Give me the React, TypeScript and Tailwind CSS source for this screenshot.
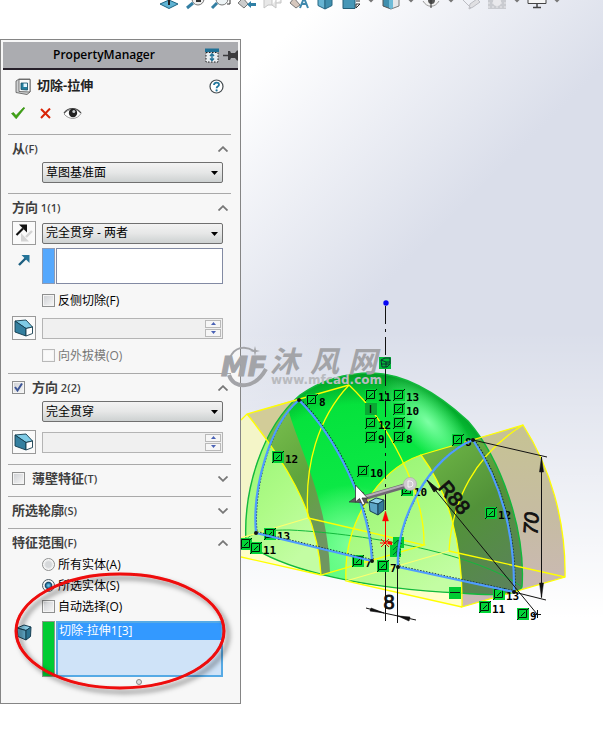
import { useState } from "react";
import type { ReactNode } from "react";

const cjk = "font-['Open_Sans','Noto_Sans_CJK_SC',sans-serif]";

/* ---------- Small icons ---------- */

function Chevron({ open }: { open: boolean }) {
  return (
    <svg viewBox="0 0 10 6" className="w-[10px] h-[6px]" fill="none" stroke="#777" strokeWidth="1.8">
      <path d={open ? "M0.5 5.5 L5 1.2 L9.5 5.5" : "M0.5 0.5 L5 4.8 L9.5 0.5"} />
    </svg>
  );
}

function DraftIcon() {
  return (
    <svg viewBox="0 0 20 18" className="w-5 h-[18px] shrink-0" stroke="#123a4c" strokeWidth="0.9" strokeLinejoin="round">
      <path d="M1 2 L12 1 L18.5 8 L12 9.5 Z" fill="#7fcbe6" />
      <path d="M1 2 L12 9.5 L12 17 L1 13 Z" fill="#347f9f" />
      <path d="M12 9.5 L18.5 8 L18.5 14.5 L12 17 Z" fill="#fff" />
    </svg>
  );
}

function CubeIcon() {
  return (
    <svg viewBox="0 0 16 17" className="w-4 h-[17px]" stroke="#174055" strokeWidth="1" strokeLinejoin="round">
      <path d="M1 4 L8 1 L15 3 L10 6.5 Z" fill="#8bd0ea" />
      <path d="M1 4 L10 6.5 L10 16 L2 12.5 Z" fill="#5fa9c8" />
      <path d="M10 6.5 L15 3 L14.5 12.5 L10 16 Z" fill="#2c7391" />
    </svg>
  );
}

/* ---------- Form parts ---------- */

function Dropdown({ label, options }: { label: string; options: string[] }) {
  return (
    <div className="relative">
      <select
        aria-label={label}
        className="block w-full h-[21px] appearance-none rounded-[2px] border border-[#707070] bg-gradient-to-b from-[#f3f3f3] via-[#e6e7e7] to-[#cdd1d1] pl-[3px] pr-5 text-xs leading-[18px] text-black"
      >
        {options.map((o) => (
          <option key={o}>{o}</option>
        ))}
      </select>
      <svg viewBox="0 0 7 4" className="pointer-events-none absolute right-[5px] top-[9px] w-[7px] h-1">
        <path d="M0 0 H7 L3.5 4 Z" fill="#000" />
      </svg>
    </div>
  );
}

function Spinner({ label }: { label: string }) {
  return (
    <div className="flex h-[21px] border border-[#b4b4b4] bg-[#f0f0f0] p-px">
      <input type="text" disabled aria-label={label} className="min-w-0 flex-1 bg-transparent" />
      <div className="flex w-4 flex-col gap-px">
        {["M0 3 H5 L2.5 0 Z", "M0 0 H5 L2.5 3 Z"].map((d, i) => (
          <button
            key={d}
            aria-label={i === 0 ? "+" : "-"}
            className="flex flex-1 items-center justify-center border border-[#b9b9b9] bg-[#f6f6f6]"
          >
            <svg viewBox="0 0 5 3" className="w-[5px] h-[3px]">
              <path d={d} fill="#4a62b5" />
            </svg>
          </button>
        ))}
      </div>
    </div>
  );
}

interface CheckProps {
  children?: ReactNode;
  label?: string;
  checked?: boolean;
  disabled?: boolean;
}

function Check({ children, label, checked, disabled }: CheckProps) {
  return (
    <label className={`flex items-center gap-[3px] text-xs leading-[13px] ${disabled ? "text-[#777]" : "text-black"}`}>
      <span className="relative block w-[13px] h-[13px]">
        <input
          type="checkbox"
          aria-label={label}
          defaultChecked={checked}
          disabled={disabled}
          className="peer block w-[13px] h-[13px] appearance-none border border-[#8e8f8f] bg-gradient-to-br from-[#cdcfd3] to-[#f8f8f8] shadow-[inset_0_0_0_1px_#f4f4f4] disabled:border-[#b9b9b9] disabled:from-[#fafafa] disabled:to-[#fafafa]"
        />
        <svg viewBox="0 0 13 13" className="pointer-events-none absolute inset-0 hidden peer-checked:block">
          <path d="M3 6 L5.5 9.5 L10 2.5" fill="none" stroke="#3c5596" strokeWidth="2" />
        </svg>
      </span>
      {children}
    </label>
  );
}

function Radio({ children, checked }: { children: ReactNode; checked?: boolean }) {
  return (
    <label className="flex items-center gap-[3px] text-xs leading-[13px] text-black">
      <input
        type="radio"
        name="scope"
        defaultChecked={checked}
        className="w-[13px] h-[13px] appearance-none rounded-full border border-[#8e8f8f] bg-[radial-gradient(circle,#d6d8da_35%,#f8f8f8_65%)] checked:border-[#4d5a62] checked:bg-[radial-gradient(circle,#69c5ee_8%,#0f4466_42%,#f4f4f4_55%)]"
      />
      {children}
    </label>
  );
}

interface SectionProps {
  title: string;
  hotkey: string;
  defaultOpen?: boolean;
  lead?: ReactNode;
  className: string;
  children?: ReactNode;
}

function Section({ title, hotkey, defaultOpen = false, lead, className, children }: SectionProps) {
  const [open, setOpen] = useState(defaultOpen);

  return (
    <section className={`ml-[5px] mr-[7px] border-t border-[#a9a9a9] ${className}`}>
      <div className="flex h-[27px] items-center pl-1 pr-[3px]">
        {lead && <span className="mr-[7px]">{lead}</span>}
        <h3 className="flex-1 text-[13px] font-bold leading-4 text-[#3f3f3f]">
          {title}
          <span className="text-[11px] font-semibold">{hotkey}</span>
        </h3>
        <button aria-label={title} onClick={() => setOpen(!open)}>
          <Chevron open={open} />
        </button>
      </div>
      {open && <div className="pl-1 pr-2">{children}</div>}
    </section>
  );
}

function Row({ icon, children }: { icon?: ReactNode; children: ReactNode }) {
  return (
    <div className="grid grid-cols-[24px_minmax(0,1fr)] items-center gap-x-[6px]">
      <div className="flex justify-center">{icon}</div>
      {children}
    </div>
  );
}

function ToolButton({ label, children }: { label: string; children: ReactNode }) {
  return (
    <button aria-label={label} className="flex w-6 h-6 items-center justify-center border border-[#9a9a9a] bg-[#fafafa]">
      {children}
    </button>
  );
}

/* ---------- Property panel ---------- */

function PropertyPanel() {
  return (
    <aside className="relative z-10 mt-[29px] w-[241px] border border-[#858585] bg-[#f7f7f7] p-[2px] pb-[26px]">
      <header className="flex h-7 items-center border-b-2 border-[#26202a] bg-[#abacb0]">
        <h2 className="flex-1 pl-[50px] text-xs font-semibold text-black">PropertyManager</h2>
        <svg viewBox="0 0 14 15" className="mr-1 w-[14px] h-[15px]">
          <path d="M1 4.5 H13 V14 H1 Z" fill="#e9edf0" stroke="#222" strokeDasharray="1.5 1.5" />
          <path d="M0 0.5 H14 V4 H0 Z" fill="#1f7196" />
          <path d="M7 5.5 V12.5 M5 8 L7 5.8 L9 8 M5 10.5 L7 12.5 L9 10.5" fill="none" stroke="#1f7196" strokeWidth="1.4" />
        </svg>
        <svg viewBox="0 0 15 11" className="w-[15px] h-[11px]" fill="#3b3b3d">
          <path d="M0 4.7 H5 V1 H7 L8 3 H12 L14 0.5 H15 V10.5 H14 L12 8 H8 L7 10 H5 V6.3 H0 Z" />
        </svg>
      </header>

      <div className="flex h-8 items-center pl-3 pr-[14px]">
        <svg viewBox="0 0 16 17" className="w-4 h-[17px]" stroke="#555" strokeWidth="0.8" strokeLinejoin="round">
          <path d="M1 3 L4 1 H15 V14 L12 16.5 L1 14.5 Z" fill="#cfd1d2" />
          <path d="M4 1.5 H15 V14 L4 13.5 Z" fill="#fafafa" />
          <path d="M6 5 H12.5 V12 L6 11.5 Z" fill="#247fa0" stroke="#174e66" />
          <path d="M8.5 5.5 H12 V9 H8.5 Z" fill="#e3f6ff" stroke="none" />
        </svg>
        <h1 className="flex-1 pl-[6px] text-[13px] font-bold text-[#222]">切除-拉伸</h1>
        <button aria-label="帮助">
          <svg viewBox="0 0 15 15" className="w-[15px] h-[15px]">
            <circle cx="7.5" cy="7.5" r="6.5" fill="#fff" stroke="#454c50" strokeWidth="1.2" />
            <path d="M5 6 C5 2.8 10 2.8 10 5.7 C10 7.4 7.6 7.2 7.6 9.3" fill="none" stroke="#22779d" strokeWidth="1.8" />
            <circle cx="7.6" cy="11.4" r="1.1" fill="#22779d" />
          </svg>
        </button>
      </div>

      <div className="mb-[10px] flex h-[22px] items-center pl-2">
        <button aria-label="确定">
          <svg viewBox="0 0 14 12" className="w-[14px] h-3">
            <path d="M0.5 6.5 L2.5 5.5 L5 8.5 L12.5 0.5 L13.8 1 L5.2 11.8 Z" fill="#3fa312" stroke="#2e8a0b" strokeWidth="0.6" />
          </svg>
        </button>
        <button aria-label="取消" className="ml-[15px]">
          <svg viewBox="0 0 11 11" className="w-[11px] h-[11px]">
            <path d="M1 1 L10 10 M10 0.5 L1 10" stroke="#d92507" strokeWidth="2" />
          </svg>
        </button>
        <button aria-label="预览" className="ml-3">
          <svg viewBox="0 0 19 13" className="w-[19px] h-[13px]">
            <path d="M1 7 C5 1 14 1 18 6.5 C14 13 6 13 1 7 Z" fill="#fff" stroke="#999" />
            <path d="M1 6 C5 0 14 0 18 6" fill="none" stroke="#444" strokeWidth="1.2" />
            <circle cx="10" cy="6" r="4.2" fill="#222" />
            <circle cx="10.8" cy="4.4" r="1.5" fill="#c9cdd0" />
          </svg>
        </button>
      </div>

      <Section title="从" hotkey="(F)" defaultOpen className="pb-[10px]">
        <Row>
          <Dropdown label="从" options={["草图基准面", "曲面/面/基准面", "顶点", "等距"]} />
        </Row>
      </Section>

      <Section title="方向" hotkey=" 1(1)" defaultOpen className="pb-[3px]">
        <Row
          icon={
            <ToolButton label="反向">
              <svg viewBox="0 0 18 20" className="w-[18px] h-5 shrink-0">
                <path d="M17 8 L11 14" stroke="#d4d4d4" strokeWidth="2.4" />
                <path d="M6 10 V18.5 H14 Z" fill="#d4d4d4" />
                <path d="M1.5 12 L8 5.5" stroke="#111" strokeWidth="2.2" />
                <path d="M4 1.5 H12 V9.5 Z" fill="#111" />
              </svg>
            </ToolButton>
          }
        >
          <Dropdown label="终止条件 1" options={["完全贯穿 - 两者", "完全贯穿", "给定深度"]} />
        </Row>
        <div className="mt-[3px]">
          <Row
            icon={
              <svg viewBox="0 0 12 12" className="mb-3 w-3 h-3">
                <path d="M1 11 L8 4" stroke="#1d5f80" strokeWidth="2.4" />
                <path d="M3.5 1 H11.5 V9 Z" fill="#247398" />
              </svg>
            }
          >
            <div className="flex h-9 gap-px">
              <div className="w-[13px] border border-[#8d9bb5] bg-[#55a8fd]" />
              <textarea aria-label="拉伸方向" className="min-w-0 flex-1 resize-none border border-[#828aa3] bg-white" />
            </div>
          </Row>
        </div>
        <div className="flex h-8 items-center pl-[30px]">
          <Check>反侧切除(F)</Check>
        </div>
        <Row icon={<ToolButton label="拔模开/关 1"><DraftIcon /></ToolButton>}>
          <Spinner label="拔模角度 1" />
        </Row>
        <div className="flex h-[30px] items-center pl-[30px]">
          <Check disabled>向外拔模(O)</Check>
        </div>
      </Section>

      <Section title="方向" hotkey=" 2(2)" defaultOpen lead={<Check label="方向 2" checked />} className="pb-[10px]">
        <Row>
          <Dropdown label="终止条件 2" options={["完全贯穿", "给定深度"]} />
        </Row>
        <div className="mt-2">
          <Row icon={<ToolButton label="拔模开/关 2"><DraftIcon /></ToolButton>}>
            <Spinner label="拔模角度 2" />
          </Row>
        </div>
      </Section>

      <Section title="薄壁特征" hotkey="(T)" lead={<Check label="薄壁特征" />} className="pb-1" />
      <Section title="所选轮廓" hotkey="(S)" className="pb-1" />

      <Section title="特征范围" hotkey="(F)" defaultOpen className="">
        <div className="flex flex-col gap-2 pl-[30px] pt-[2px]">
          <Radio>所有实体(A)</Radio>
          <Radio checked>所选实体(S)</Radio>
          <Check>自动选择(O)</Check>
        </div>
        <div className="mt-2">
          <Row icon={<div className="mb-[34px]"><CubeIcon /></div>}>
            <div className="flex h-14 gap-px">
              <div className="w-[13px] border border-[#8b9b8b] bg-[#00cc33]" />
              <ul className="min-w-0 flex-1 border-2 border-[#56aae5] bg-[#cfe3f8] text-xs text-white">
                <li className="h-[17px] bg-[#3399ff] pl-px leading-[16px]">切除-拉伸1[3]</li>
              </ul>
            </div>
          </Row>
        </div>
      </Section>

      {/* Resize grip and the red annotation ring */}
      <svg viewBox="0 0 240 150" className="pointer-events-none absolute left-0 bottom-0 w-[240px] h-[150px]">
        <defs>
          <filter id="ringShadow" x="-10%" y="-10%" width="125%" height="130%">
            <feDropShadow dx="4" dy="4" stdDeviation="2.5" floodColor="#000" floodOpacity="0.5" />
          </filter>
        </defs>
        <circle cx="138" cy="129" r="2.5" fill="#ddd" stroke="#888" />
        <ellipse cx="119" cy="78" rx="104" ry="57" fill="none" stroke="#ee0808" strokeWidth="3" filter="url(#ringShadow)" />
      </svg>
    </aside>
  );
}

/* ---------- View toolbar ---------- */

const toolbar: { name: string; art: ReactNode }[] = [
  { name: "正视于", art: <><path d="M4 4 L13 0 L22 4 L13 8.5 Z" fill="#5fb3d3" stroke="#1f6583" /><path d="M13 0 V5" stroke="#222" strokeWidth="2" /></> },
  { name: "整屏显示全图", art: <><circle cx="16" cy="-1" r="6" fill="#eee" stroke="#777" /><path d="M11 3 L5 8" stroke="#347fa3" strokeWidth="3" /><path d="M14 1 H19" stroke="#333" strokeWidth="2" /></> },
  { name: "局部放大", art: <><circle cx="14" cy="-1" r="6" fill="#eef4f6" stroke="#777" /><path d="M9 3 L4 8" stroke="#347fa3" strokeWidth="3" /><path d="M19 4 H22 V0" fill="none" stroke="#333" /></> },
  { name: "上一视图", art: <><path d="M4 3 L9 -2 L14 4 L10 8 Z" fill="#ccc" stroke="#777" /><path d="M13 4.5 L17 1 V3 H22 V6 H17 V8 Z" fill="#2e7fa5" /></> },
  { name: "剖面视图", art: <path d="M4 0 V8 L8 5 H12 V0 M12 5 L16 8 V0 M16 3 H21 V0" fill="#e8e8e8" stroke="#c5c5c5" /> },
  { name: "动态注解视图", art: <><path d="M4 3 L8 -2 L14 5 L10 8 Z" fill="#d6c7bd" stroke="#777" /><path d="M14 8 L18 -2 L22 8 M16 4 H21" fill="none" stroke="#4089ad" strokeWidth="2" /></> },
  { name: "视图定向", art: <><path d="M6 -2 H13 V9 L6 5.5 Z" fill="#67b4d2" stroke="#276682" /><path d="M13 -2 H20 V5.5 L13 9 Z" fill="#408fae" stroke="#276682" /></> },
  { name: "等轴测", art: <><path d="M5 -2 H17 V8.5 H5 Z" fill="#4797b7" stroke="#245f78" /><path d="M18 4 H22 L18 8 V4 M18 1 H22" fill="#fff" stroke="#333" /></> },
  { name: "caret", art: null },
  { name: "显示样式", art: <><path d="M5 -2 H13 V9 L5 6 Z" fill="#408fae" stroke="#555" /><path d="M13 -2 H21 V6 L13 9 Z" fill="#e5e7e9" stroke="#777" /><path d="M11 -2 H15 V8 L13 9 L11 8 Z" fill="#6fbbd7" /></> },
  { name: "caret", art: null },
  { name: "隐藏/显示项目", art: <><path d="M5 1 C9 8 17 8 21 1" fill="#f3f3f3" stroke="#999" /><path d="M10 0 A3.5 4 0 0 0 17 0 Z" fill="#555" /><path d="M13 0 V8" stroke="#333" /></> },
  { name: "caret", art: null },
  { name: "编辑外观", art: <><path d="M5 0 L13 8 M11 9 L12 4 L19 -1 L22 2 L15 7 Z" fill="#e0e0e3" stroke="#bcbdc3" /></> },
  { name: "应用布景", art: <><path d="M4 -1 H22 V9 H4 Z" fill="#c9cbd0" /><path d="M4 7 H22 M4 3 H22" stroke="#e9e9ec" strokeDasharray="2 2" /><circle cx="13" cy="2" r="4" fill="#e9e9ec" /></> },
  { name: "caret", art: null },
  { name: "视图设定", art: <><path d="M4 -2 H22 V3.5 H4 Z" fill="#f5f5f5" stroke="#444" /><path d="M13 4 V7 M9 7.5 H17" stroke="#444" strokeWidth="1.5" /></> },
  { name: "caret", art: null },
];

function ViewToolbar() {
  return (
    <nav className="flex h-[10px] overflow-hidden pl-[156px]">
      {toolbar.map((t, i) =>
        t.name === "caret" ? (
          <svg key={i} viewBox="0 0 14 10" className="w-[14px] h-[10px] shrink-0">
            <path d="M4.5 0 H9.5 L7 2.5 Z" fill="#777" />
          </svg>
        ) : (
          <button key={i} aria-label={t.name} className="w-[26px] h-[10px] shrink-0">
            <svg viewBox="0 0 26 10" className="block w-[26px] h-[10px]">{t.art}</svg>
          </button>
        )
      )}
    </nav>
  );
}

/* ---------- Model view ---------- */

const DOME =
  "M246 543 C243 490 262 428 300 395 C323 379 348 373 372 373 C408 374 443 398 468 421 C501 459 526 530 522 587 C517 597 485 595 460 593 C370 589 285 572 246 543 Z";
const LEFT_FACE =
  "M241 420 L247 414 C280 455 318 510 321 575 L241 557 Z";
const LEFT_STRIP =
  "M247 414 L300 398 L289 412 C298 445 328 500 330 573 L321 575 C318 510 280 455 247 414 Z";
const RIGHT_FRONT =
  "M421 455 C449 492 463 545 462 607 L346 581 C343 525 377 470 421 455 Z";
const RIGHT_SIDE =
  "M421 455 L523 425 C550 467 566 520 565 577 L462 607 C463 545 449 492 421 455 Z";
const LEFT_SKETCH = "M299 400 C269 425 252 490 256 533 L372 561 C370 505 336 437 299 400 Z";
const RIGHT_SKETCH = "M473 440 C430 457 395 520 398 567 L514 592 C515 525 497 476 473 440 Z";

// [x, y, number] of each sketch relation, (x, y) being the tag's centre
const relations: [number, number, string][] = [
  [312, 400, "8"],
  [371, 395, "11"],
  [399, 395, "13"],
  [399, 409, "10"],
  [371, 423, "12"],
  [399, 423, "7"],
  [371, 437, "9"],
  [399, 437, "8"],
  [458, 440, "8"],
  [407, 490, "10"],
  [278, 457, "12"],
  [363, 471, "10"],
  [270, 534, "13"],
  [246, 544, "9"],
  [256, 548, "11"],
  [358, 561, "7"],
  [383, 566, "7"],
  [491, 513, "12"],
  [499, 594, "13"],
  [485, 607, "11"],
  [523, 614, "9"],
];

function RelationTag({ x, y, n }: { x: number; y: number; n: string }) {
  return (
    <g>
      <path d={`M${x - 6} ${y - 6} h12 v12 h-12 Z`} fill="#02d437" />
      <path
        d={`M${x - 4.5} ${y - 4.5} h8 v8 h-8 Z M${x - 6} ${y + 6} l2 -2 M${x - 2} ${y + 2} l4 -4 M${x + 4} ${y - 4} l2 -2`}
        fill="none"
        stroke="#001a05"
        strokeWidth="1"
      />
      <text x={x + 7} y={y + 6} className="font-['DejaVu_Sans_Mono',monospace] text-[11px] font-bold">
        {n}
      </text>
    </g>
  );
}

function ModelView() {
  return (
    <svg viewBox="0 0 603 736" className="pointer-events-none absolute left-0 top-0 w-[603px] h-[736px]">
      <defs>
        <linearGradient id="domeBase" x1="0" y1="0" x2="0.2" y2="1">
          <stop offset="0" stopColor="#08c936" />
          <stop offset="0.2" stopColor="#05e23c" />
          <stop offset="0.55" stopColor="#0be845" />
          <stop offset="1" stopColor="#59ff7c" />
        </linearGradient>
        <radialGradient id="domeShine" gradientUnits="userSpaceOnUse" cx="0" cy="0" r="1" gradientTransform="translate(428 422) rotate(46) scale(60 26)">
          <stop offset="0" stopColor="#7dffa4" />
          <stop offset="1" stopColor="#7dffa4" stopOpacity="0" />
        </radialGradient>
        {/* shade that follows the rim, stronger to the right */}
        <radialGradient id="domeEdge" gradientUnits="userSpaceOnUse" cx="358" cy="528" r="158">
          <stop offset="0.78" stopColor="#008c20" stopOpacity="0" />
          <stop offset="1" stopColor="#007c1c" stopOpacity="0.7" />
        </radialGradient>
        <radialGradient id="lowGlow" gradientUnits="userSpaceOnUse" cx="350" cy="545" r="60">
          <stop offset="0" stopColor="#7dff98" />
          <stop offset="1" stopColor="#7dff98" stopOpacity="0" />
        </radialGradient>
        <linearGradient id="tan" x1="0" y1="0" x2="0" y2="1">
          <stop offset="0" stopColor="#c6c393" />
          <stop offset="0.5" stopColor="#c6bca2" />
          <stop offset="1" stopColor="#cbb8b8" />
        </linearGradient>
        <linearGradient id="darkCut" x1="0" y1="0" x2="0.6" y2="1">
          <stop offset="0" stopColor="#75c048" />
          <stop offset="0.5" stopColor="#529239" />
          <stop offset="1" stopColor="#5c8060" />
        </linearGradient>
        <linearGradient id="strip" x1="0" y1="0" x2="0.4" y2="1">
          <stop offset="0" stopColor="#83c955" />
          <stop offset="0.6" stopColor="#5fa53c" />
          <stop offset="1" stopColor="#6f9660" />
        </linearGradient>
        <linearGradient id="frontCut" x1="0" y1="0" x2="0.5" y2="1">
          <stop offset="0" stopColor="#91f36e" />
          <stop offset="0.6" stopColor="#aefb87" />
          <stop offset="1" stopColor="#c3fda3" />
        </linearGradient>
        <clipPath id="domeClip"><path d={DOME} /></clipPath>
        <clipPath id="viewClip"><path d="M241 0 H603 V736 H241 Z" /></clipPath>
      </defs>

      <g clipPath="url(#viewClip)">
        {/* solids */}
        <path d={LEFT_FACE} fill="#f4f5c8" />
        <path d={LEFT_STRIP} fill="#d2cc98" />
        <path d="M241 540 L321 575 L241 557 Z" fill="#ffffc8" />
        <path d={RIGHT_SIDE} fill="url(#tan)" />
        <path d={RIGHT_FRONT} fill="#ffffc8" />
        <path d={DOME} fill="url(#domeBase)" />
        <path d={DOME} fill="url(#domeEdge)" />
        <path d={DOME} fill="url(#lowGlow)" />
        <path d={DOME} fill="url(#domeShine)" />
        <g clipPath="url(#domeClip)">
          <path d={LEFT_FACE} fill="url(#frontCut)" />
          <path d={LEFT_STRIP} fill="url(#strip)" />
          <path d={RIGHT_SIDE} fill="url(#darkCut)" />
          <path d={RIGHT_FRONT} fill="url(#frontCut)" />
        </g>

        {/* dome outline and base ellipse */}
        <g fill="none" stroke="#12b93c" strokeWidth="1.4">
          <path d={DOME} />
          <path d="M246 540 C252 531 270 530 290 530 C370 534 480 555 522 587" strokeWidth="1" />
        </g>

        {/* body edges */}
        <g fill="none" stroke="#ffff00" strokeWidth="1.3">
          <path d="M241 420 L247 414 L349 385" />
          <path d="M247 414 C280 455 318 510 321 575" />
          <path d="M349 385 C318 418 304 465 308 518" />
          <path d="M349 385 C386 420 425 490 424 545" />
          <path d="M308 518 L424 545 L321 575 L241 557" />
          <path d="M308 518 L241 538" stroke="#fbff70" />
          <path d={RIGHT_SIDE} />
          <path d="M421 455 C377 470 343 525 346 581 L462 607" />
          <path d="M523 425 C475 455 452 500 449 551" />
          <path d="M449 551 L565 577" />
          <path d="M449 551 L346 581" stroke="#fbff70" />
        </g>

        {/* axis */}
        <path d="M385.5 306 V545" stroke="#111" strokeDasharray="18 5 3 5" fill="none" />
        <path d="M385.5 545 V621 M397.5 567 V623" stroke="#111" fill="none" />
        <circle cx="386" cy="303" r="2.7" fill="#0707f5" />
        <path d="M379 357 h12 v12 h-12 Z" fill="#00b838" />
        <path d="M381 360 l4 -2 h5 v6 l-3 3 h-5 Z M381 360 l5 2 h4 M386 362 v5 M381 364 h8" stroke="#123" strokeWidth="0.9" fill="none" />

        {/* relation glyphs */}
        <path d="M365 403 h12 v12 h-12 Z" fill="#0aa834" />
        <path d="M370.5 405 v8" stroke="#111" strokeWidth="1.4" />
        <path d="M449 587 h12 v12 h-12 Z" fill="#00cc33" />
        <path d="M450 592.5 h10" stroke="#111" strokeWidth="1" />
        <path d="M393 537 h11 v11 h-3 v9 h-11 v-12 h3 Z" fill="#00cc33" />
        <path d="M394 544 l4 -4 l4 4 M398 540 v8 M393 550 l4 -4 l4 4 M397 548 v8 M393 555 l4 -4 l4 4" fill="none" stroke="#063" />
        {relations.map(([x, y, n]) => (
          <RelationTag key={`${x}-${y}`} x={x} y={y} n={n} />
        ))}

        {/* sketch profiles */}
        {[LEFT_SKETCH, RIGHT_SKETCH].map((d) => (
          <g key={d} fill="none">
            <path d={d} stroke="#123" strokeWidth="1.2" strokeDasharray="1.5 1.5" transform="translate(1 -1)" />
            <path d={d} stroke="#4f9cff" strokeWidth="2.2" strokeLinejoin="round" />
          </g>
        ))}
        {[[299, 400], [256, 533], [372, 561], [473, 440], [398, 567], [514, 592]].map(([cx, cy]) => (
          <circle key={cx} cx={cx} cy={cy} r="2" fill="#111" />
        ))}

        {/* dimensions */}
        <g stroke="#111" fill="#111">
          <path d="M473 440 L547 457 M514 592 L546 600 M541.5 457 V597" fill="none" />
          <path d="M541.5 457 l2 15 h-4 Z M541.5 598 l2 -15 h-4 Z" strokeWidth="0.5" />
          <path d="M427 480 L537 614 M533 614.5 h8 M537.5 610 v8" fill="none" />
          <path d="M427 480 l11 9 l-4 3 Z" strokeWidth="0.8" />
          <path d="M366 608 L384 613 L398 616 L416 620" fill="none" />
          <path d="M384 613 l-13 -5 l-1 3 Z M398 616 l12 1 l-1 4 Z" strokeWidth="0.6" />
        </g>
        <g className="font-['Liberation_Sans_Narrow','Liberation_Sans',sans-serif] text-[20px]" fill="#111" stroke="#111" strokeWidth="0.9" textAnchor="middle">
          <text transform="translate(538 524) rotate(-86)" fontStyle="italic">70</text>
          <text transform="translate(449 502) rotate(50)">R88</text>
          <text x="389" y="609">8</text>
        </g>

        {/* origin */}
        <g stroke="#f00" fill="#f00">
          <path d="M385.5 543 V515 M380 543 H391 M381 539 L389 547 M389 539 L381 547" fill="none" />
          <path d="M385.5 511 l3 10 h-6 Z M388 541 l4 1 v3 l-4 -1 Z" strokeWidth="0.4" />
        </g>

        {/* drag handle */}
        <path d="M360 499 L408 485" stroke="#6f6872" strokeWidth="5" />
        <path d="M360 498 L408 484" stroke="#b6aeb7" strokeWidth="2" />
        <path d="M349 502 L363 492 L368 503 Z" fill="#5d5760" stroke="#333" strokeWidth="0.6" />
        <circle cx="410" cy="484" r="6.5" fill="#cfc8cf" stroke="#aaa2aa" strokeWidth="0.6" />
        <path d="M408 481 h2 q3 0 3 3 q0 3 -3 3 h-2 Z" fill="none" stroke="#f5f5f5" />
        <g strokeLinejoin="round" stroke="#174055">
          <path d="M369 502 L376 498 L384 500 L378 504 Z" fill="#8fd0ea" />
          <path d="M369 502 L378 504 V515 L370 511 Z" fill="#5ba5c7" />
          <path d="M378 504 L384 500 V510 L378 515 Z" fill="#33799a" />
        </g>
        <path d="M355.5 485 V502 L359.5 498.5 L362.5 505 L365 504 L362 498 H367.5 Z" fill="#fff" stroke="#333" strokeWidth="0.8" />
      </g>
    </svg>
  );
}

function Watermark() {
  return (
    <svg viewBox="0 0 180 80" className="pointer-events-none absolute left-[215px] top-[330px] z-20 w-[180px] h-20">
      <g fill="none" stroke="#a3a4a8">
        <path d="M15 28 C19 17 30 15 39 21" strokeWidth="2" />
        <path d="M14 45 C19 60 40 59 51 39" strokeWidth="4" />
      </g>
      <path d="M40 16 l1 4 l4 1 l-4 1 l-1 4 l-1 -4 l-4 -1 l4 -1 Z" fill="#a3a4a8" />
      <text x="6" y="46" fill="#a3a4a8" stroke="#a3a4a8" strokeWidth="1" className="font-['DejaVu_Sans',sans-serif] text-[27px] font-bold italic">
        MF
      </text>
      <g fill="#a3a4a8" className="font-['Noto_Sans_CJK_SC',sans-serif] text-[29px] font-bold italic">
        <text x="55" y="42">沐</text>
        <text x="95" y="42">风</text>
        <text x="133" y="42">网</text>
      </g>
      <text x="56" y="54" fill="#b9bbbf" className="font-['DejaVu_Sans',sans-serif] text-[12px] font-bold">
        www.mfcad.com
      </text>
    </svg>
  );
}

export default function App() {
  return (
    <main
      className={`relative min-h-screen overflow-hidden bg-[linear-gradient(to_bottom,transparent_45%,#ffffff_84%),linear-gradient(135deg,#ffffff_24%,#dadeea_50%)] ${cjk}`}
    >
      <ViewToolbar />
      <ModelView />
      <PropertyPanel />
      <Watermark />
    </main>
  );
}
